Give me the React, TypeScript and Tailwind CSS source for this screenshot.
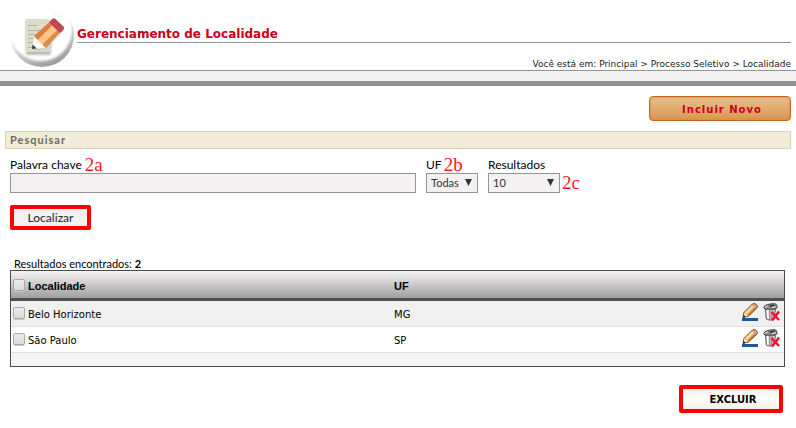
import { useState, type ReactNode } from 'react';

interface Locality {
    id: number;
    name: string;
    uf: string;
}

const LOCALITIES: Locality[] = [
    { id: 1, name: 'Belo Horizonte', uf: 'MG' },
    { id: 2, name: 'São Paulo', uf: 'SP' },
];

const CHECKBOX =
    'block w-3 h-3 appearance-none rounded-xs border border-[#a9a9a9] bg-linear-to-b from-[#ececec] to-[#dadada] shadow-[0_1px_0_#c8c8c8] checked:bg-gray-500';

function NotepadLogo() {
    return (
        <svg viewBox="0 0 70 64" className="w-[70px] h-16" aria-hidden="true">
            <defs>
                <linearGradient id="ring" x1="0.25" y1="0.1" x2="0.65" y2="1">
                    <stop offset="0.3" stopColor="#ffffff" />
                    <stop offset="0.6" stopColor="#cfcfcf" />
                    <stop offset="1" stopColor="#999999" />
                </linearGradient>
                <filter id="soft" x="-10%" y="-10%" width="120%" height="120%">
                    <feGaussianBlur stdDeviation="1" />
                </filter>
            </defs>
            <circle cx="37" cy="31" r="32" fill="url(#ring)" />
            <circle cx="36" cy="26" r="31" fill="#ffffff" filter="url(#soft)" />
            <rect x="21" y="17" width="25" height="34" rx="2" fill="#b9bab5" filter="url(#soft)" />
            <rect x="20" y="15" width="25" height="33" rx="2" fill="#dcddcb" />
            <path d="M23 21.500h9M23 26.500h16M23 30.500h13M23 34.500h9M23 38.500h6M23 43.500h5" stroke="#b4b5a5" fill="none" />
            <path d="M29 47l3-13 17-18 10 10-18 19z" fill="#a8a8a4" opacity="0.5" filter="url(#soft)" />
            <path d="M27 45l2-13 12 12z" fill="#fdfaf3" />
            <path d="M27 45l.6-4.500 4 4z" fill="#2d3b58" />
            <path d="M29 32L44 18.500l3 3L33 36z" fill="#e17b40" />
            <path d="M33 36L47 21.500l5 4.500L37.500 40.500z" fill="#fdc781" />
            <path d="M37.500 40.500L52 26l3 2.500L41 44z" fill="#e08a4c" />
            <path d="M44 18.500l3-3.500q1.800-1.500 3.500 0l8 7.500q1.500 1.500 0 3.200L55 29z" fill="#c34753" />
            <path d="M49 9.500h2M53 12h2" stroke="#f1efc0" />
        </svg>
    );
}

function PencilIcon() {
    return (
        <svg viewBox="0 0 16 18" className="w-4 h-[18px]" aria-hidden="true">
            <rect x="0" y="15" width="16" height="3" fill="#205596" />
            <path d="M1 14.500L2 9.500L10.500 1q1.700-1 3.500.3t1.300 3.200L6.500 13z" fill="#e9b866" stroke="#5d3515" />
            <path d="M3 9.300L10.500 1.800l1.700 1.500L4.600 11z" fill="#f9dda2" />
            <path d="M5.500 12l8.300-8.300 1 1-8.300 7.800z" fill="#b46f26" />
            <path d="M10.800 1.500q1.500-.8 3 .4t1 2.500l-1 1-3.800-3.200z" fill="#d99b82" />
            <path d="M1.200 14.300l1.200-4.500 3.500 3z" fill="#f7e9ce" />
            <path d="M.8 14.700l.9-2.700 2 1.700z" fill="#2b1a0e" />
        </svg>
    );
}

function TrashIcon() {
    return (
        <svg viewBox="0 0 17 18" className="w-[17px] h-[18px]" aria-hidden="true">
            <path d="M2.500 5.500l.8 10.500q3.500 2 7.500.5l1.700-10z" fill="#d5d5d5" stroke="#5a5a5a" />
            <path d="M4.500 6.500l.5 9.500" stroke="#ffffff" strokeWidth="1.500" />
            <path d="M6.800 7v9.500M9.200 7l-.4 9" stroke="#777777" />
            <path d="M.8 4.500Q1 2.500 4.500 1.500l6-.9q3-.1 3.500 2.200v2.200l-6 1.200H2z" fill="#8f8f8f" stroke="#484848" />
            <path d="M5.500 3l5-1.500 2 .8-4.500 1.700z" fill="#333333" />
            <path d="M2.200 4.200l2.300-1.400M9 4.800l3.500-1" stroke="#ffffff" />
            <path d="M8.500 9l7.500 8M16 8.500L9 17.500" stroke="#ec1338" strokeWidth="2.500" />
        </svg>
    );
}

function Note({ children }: { children: ReactNode }) {
    return <span className="font-['Liberation_Serif',serif] text-[19px] leading-4 text-[#ff1a1a]">{children}</span>;
}

interface SelectBoxProps {
    id: string;
    className: string;
    options: string[];
}

function SelectBox({ id, className, options }: SelectBoxProps) {
    return (
        <div className={`relative ${className}`}>
            <select
                id={id}
                className="block w-full h-5 appearance-none border border-[#959595] bg-[#f3f1f2] pl-1 text-[11px] leading-4 text-[#333333] font-['Lato',sans-serif]"
            >
                {options.map((option) => (
                    <option key={option}>{option}</option>
                ))}
            </select>
            <svg viewBox="0 0 7 7" className="pointer-events-none absolute top-[6px] right-[6px] w-[7px] h-[7px]" aria-hidden="true">
                <path d="M0 0h7L3.500 7z" fill="#333333" />
            </svg>
        </div>
    );
}

export default function App() {
    const [keyword, setKeyword] = useState('');
    const [selected, setSelected] = useState<number[]>([]);

    const toggle = (id: number) => {
        setSelected((prev) => (prev.includes(id) ? prev.filter((item) => item !== id) : [...prev, id]));
    };

    const toggleAll = () => {
        setSelected((prev) => (prev.length === LOCALITIES.length ? [] : LOCALITIES.map((item) => item.id)));
    };

    return (
        <div className="bg-white pb-4 font-['DejaVu_Sans',sans-serif] text-black">
            {/* Header */}
            <header className="flex h-[70px] pt-1 pl-[5px] pr-[5px]">
                <NotepadLogo />
                <div className="flex-1 pt-[22px] pl-0.5">
                    <h1 className="border-b border-[#959595] pt-px text-[12px] leading-[15px] font-bold text-[#cc0018]">
                        Gerenciamento de Localidade
                    </h1>
                    <nav className="pt-[15px] text-right text-[9px] leading-3 text-[#222222]">
                        Você está em: Principal &gt; Processo Seletivo &gt; Localidade
                    </nav>
                </div>
            </header>
            <div className="h-4 border-t border-b-5 border-t-[#959595] border-b-[#919191] bg-[#f3f1f2]" />

            <main className="px-[5px] pt-2.5">
                <div className="flex justify-end">
                    <button
                        type="button"
                        className="w-[142px] h-[25px] rounded-[4px] border border-[#c1651a] bg-linear-to-b from-[#e9c08f] to-[#d99650] pl-1 pt-0.5 text-[10px] font-bold tracking-[1px] text-[#cc0018] shadow-[inset_0_0_3px_#d08a45]"
                    >
                        Incluir Novo
                    </button>
                </div>

                {/* Search form */}
                <form onSubmit={(e) => e.preventDefault()}>
                    <h2 className="mt-2.5 h-[18px] border border-[#d9d3ae] bg-[#f1ebd9] pl-1 font-['Lato',sans-serif] text-[11px] leading-4 font-bold tracking-[1px] text-[#6f6a60]">
                        Pesquisar
                    </h2>
                    <div className="mt-2 flex items-end gap-2.5 pl-[5px] font-['Lato',sans-serif] text-[12px] leading-4">
                        <div className="w-[406px]">
                            <div className="flex gap-[3px]">
                                <label htmlFor="keyword">Palavra chave</label>
                                <Note>2a</Note>
                            </div>
                            <input
                                id="keyword"
                                type="text"
                                value={keyword}
                                onChange={(e) => setKeyword(e.target.value)}
                                className="block w-full h-5 border border-[#959595] bg-[#f3f1f2] px-1 text-[11px]"
                            />
                        </div>
                        <div className="w-[52px]">
                            <div className="flex gap-0.5">
                                <label htmlFor="uf">UF</label>
                                <Note>2b</Note>
                            </div>
                            <SelectBox id="uf" className="w-full" options={['Todas', 'MG', 'SP']} />
                        </div>
                        <div>
                            <label htmlFor="results" className="block">Resultados</label>
                            <div className="flex items-center gap-0.5">
                                <SelectBox id="results" className="w-[72px]" options={['10', '20', '50']} />
                                <Note>2c</Note>
                            </div>
                        </div>
                    </div>
                    <button
                        type="submit"
                        className="mt-3 ml-[5px] block w-[81px] h-[25px] rounded-xs border-4 border-[#ff0000] bg-[#f3f1f2] font-['Lato',sans-serif] text-[12px] leading-4 font-medium text-[#333333]"
                    >
                        Localizar
                    </button>
                </form>

                {/* Results */}
                <section className="mt-[26px] pl-[5px] pr-1.5">
                    <p className="h-3.5 pl-1 font-['Lato',sans-serif] text-[11px] leading-4">
                        Resultados encontrados: <b>{LOCALITIES.length}</b>
                    </p>
                    <table className="w-full table-fixed border-separate border-spacing-0 border border-[#4a4a4a] text-left text-[10px] leading-3">
                        <colgroup>
                            <col className="w-[17px]" />
                            <col className="w-[366px]" />
                            <col />
                            <col className="w-12" />
                        </colgroup>
                        <thead className="bg-linear-to-b from-[#f7f5f5] to-[#989595] font-['Liberation_Sans',sans-serif] text-[11px]">
                            <tr className="h-[30px] *:border-b-3 *:border-[#4f4f4f]">
                                <th className="pl-0.5">
                                    <input
                                        type="checkbox"
                                        aria-label="Selecionar todas"
                                        checked={selected.length === LOCALITIES.length}
                                        onChange={toggleAll}
                                        className={CHECKBOX}
                                    />
                                </th>
                                <th className="pt-0.5">Localidade</th>
                                <th className="pt-0.5">UF</th>
                                <td />
                            </tr>
                        </thead>
                        <tbody>
                            {LOCALITIES.map((item) => (
                                <tr key={item.id} className="h-[26px] odd:bg-[#f0f0f0] *:border-b *:border-[#e0e0e0]">
                                    <td className="pl-0.5 pb-0.5">
                                        <input
                                            id={`locality-${item.id}`}
                                            type="checkbox"
                                            checked={selected.includes(item.id)}
                                            onChange={() => toggle(item.id)}
                                            className={CHECKBOX}
                                        />
                                    </td>
                                    <td className="pt-0.5">
                                        <label htmlFor={`locality-${item.id}`}>{item.name}</label>
                                    </td>
                                    <td className="pt-0.5">{item.uf}</td>
                                    <td>
                                        <div className="flex justify-end gap-[5px] pr-1 pb-1">
                                            <button type="button" aria-label={`Editar ${item.name}`}>
                                                <PencilIcon />
                                            </button>
                                            <button type="button" aria-label={`Excluir ${item.name}`}>
                                                <TrashIcon />
                                            </button>
                                        </div>
                                    </td>
                                </tr>
                            ))}
                        </tbody>
                        <tfoot>
                            <tr className="h-[13px] bg-[#f5f5f5]">
                                <td colSpan={4} />
                            </tr>
                        </tfoot>
                    </table>
                </section>

                <div className="mt-[18px] flex justify-end pr-2">
                    <button
                        type="button"
                        className="w-[104px] h-7 rounded-xs border-4 border-[#ff0000] bg-linear-to-b from-[#f4f0e6] via-white to-[#f4f0e6] pl-1 text-[10px] font-bold"
                    >
                        EXCLUIR
                    </button>
                </div>
            </main>
        </div>
    );
}
